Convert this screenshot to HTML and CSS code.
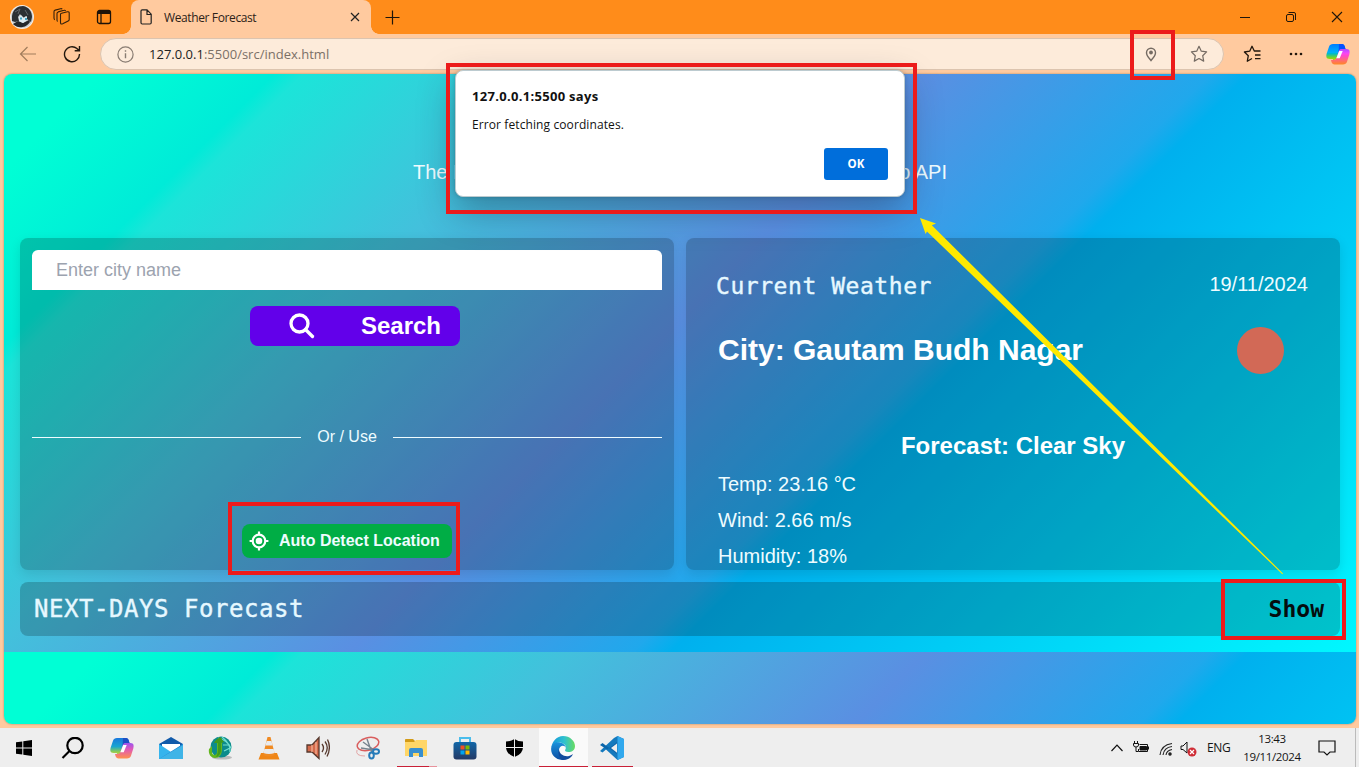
FILE: index.html
```html
<!DOCTYPE html>
<html lang="en">
<head>
<meta charset="utf-8">
<title>Weather Forecast</title>
<link rel="stylesheet" href="styles.css">
</head>
<body>
<svg class="defs" width="0" height="0">
  <defs>
    <linearGradient id="cpA" x1="0" y1="0" x2="0" y2="1"><stop offset="0" stop-color="#1877dd"/><stop offset=".45" stop-color="#19a5d0"/><stop offset=".72" stop-color="#8ccb55"/><stop offset="1" stop-color="#ffd02f"/></linearGradient>
    <linearGradient id="cpB" x1="0" y1="0" x2="0" y2="1"><stop offset="0" stop-color="#9a55ef"/><stop offset=".4" stop-color="#e058b8"/><stop offset="1" stop-color="#ff914d"/></linearGradient>
    <linearGradient id="edgeA" x1="0" y1="0" x2="1" y2="0"><stop offset="0" stop-color="#1595dc"/><stop offset=".55" stop-color="#2fc1cf"/><stop offset="1" stop-color="#69dc60"/></linearGradient>
    <linearGradient id="edgeB" x1="0" y1="0" x2="0" y2="1"><stop offset="0" stop-color="#1a92dc"/><stop offset="1" stop-color="#0c4da2"/></linearGradient>
    <linearGradient id="store" x1="0" y1="0" x2="0" y2="1"><stop offset="0" stop-color="#1267a8"/><stop offset="1" stop-color="#243a66"/></linearGradient>
    <symbol id="copilot" viewBox="0 0 24 24">
      <path d="M7 2h9c1.600 0 2.300 1 2.800 2.500L19.500 7h-3c-2 0-2.800 1-3.300 2.700L11 17.500C10.400 19.500 9.500 21 7.500 21H6l1-4H3.500C0 17 0 14 .7 11.500L3 4.800C3.600 3 5 2 7 2z" fill="url(#cpA)"/>
      <path d="M13 2h3c1.600 0 2.300 1 2.800 2.500L19.500 7h-3c-2 0-2.800 1-3.300 2.700L12.500 12z" fill="#1c4fc4"/>
      <path d="M17 22.500H8.500C7 22.500 6 21.500 5.500 20L5 18h2.500c2 0 2.800-1 3.300-2.700L13 8.500C13.600 7 14.500 7 16.500 7h4C24 7 24 10 23.300 12.500L21 19.700c-.6 1.800-2 2.800-4 2.800z" fill="url(#cpB)"/>
      <path d="M13.200 9h3.500l-3 7.300h-3.400z" fill="#fff"/>
    </symbol>
  </defs>
</svg>

<header class="titlebar">
  <svg class="avatar" viewBox="0 0 24 24"><circle cx="12" cy="12" r="12" fill="#f4eee8"/><circle cx="12" cy="12" r="11" fill="#c9cdd0"/><path d="M2 11C3 4 8 1 13 1c6 1 9 6 9 11l-1 5-4-3-1-3-3 2-3-4-2 3 1 4-4 1-3-1z" fill="#2b3034"/><path d="M3 19l5-3 5 2 6-3 1 2a11 11 0 0 1-16 3z" fill="#24282c"/><path d="M9 12l2-2 3 3 3-2v4l-4 3-4-2z" fill="#dcebf1"/><path d="M10 12.500h2v2h-2zm5 .500h2v2h-2z" fill="#42a4c4"/><path d="M5 7l5-3-2 5m7-4l3 5" stroke="#60666b" fill="none"/></svg>
  <svg class="workspaces" viewBox="0 0 18 18" fill="none" stroke="#35200b" stroke-width="1.100" stroke-linejoin="round"><path d="M7.500 6.500q0-1 1-1.200l6-1.500q1.700-.3 1.700 1.200v6.500q0 1-1 1.500l-5.500 2.700q-2.200 1-2.200-1.200z"/><path d="M4.600 13.500q-.6-.5-.6-1.500V5.500q0-1.200 1.200-1.600L11 2.300q1-.3 1.700.5M1.800 11.700Q1 11.200 1 10V3.700q0-1.200 1.200-1.600L7.500.7q1.200-.2 1.800.4"/></svg>
  <svg class="tabactions" viewBox="0 0 16 16" fill="none" stroke="#1d1309" stroke-width="1.300"><rect x="1.500" y="1.500" width="13" height="13" rx="2"/><path d="M2 3.500h12" stroke-width="3"/><path d="M5 5v9"/></svg>
  <div class="tab">
    <svg width="12" height="16" viewBox="0 0 12 16" fill="none" stroke="#222" stroke-width="1.200"><path d="M2.200.8H7l4.200 4.400v8.600q0 1.200-1.200 1.200H2.200Q1 15 1 13.800V2Q1 .8 2.200.8zM7 1v4.500h4"/></svg>
    <span>Weather Forecast</span>
    <svg width="10" height="10" viewBox="0 0 10 10" stroke="#222" stroke-width="1.200"><path d="M1 1l8 8M9 1L1 9"/></svg>
  </div>
  <svg class="plus" viewBox="0 0 15 15" stroke="#1f160b" stroke-width="1.200"><path d="M7.500.5v14M.5 7.500h14"/></svg>
  <div class="wincontrols">
    <svg width="12" height="12" viewBox="0 0 12 12" stroke="#1f160b"><path d="M1 6.500h10"/></svg>
    <svg width="12" height="12" viewBox="0 0 12 12" fill="none" stroke="#1f160b"><rect x="1.500" y="3.500" width="7" height="7" rx="1.500"/><path d="M3.500 1.500H9q1.500 0 1.500 1.500v6"/></svg>
    <svg width="12" height="12" viewBox="0 0 12 12" stroke="#1f160b" stroke-width="1.100"><path d="M1 1l10 10M11 1L1 11"/></svg>
  </div>
</header>

<nav class="toolbar">
  <svg class="back" viewBox="0 0 18 16" fill="none" stroke="#a17c5c" stroke-width="1.200"><path d="M17 8H1.500M8.500 1L1.500 8l7 7"/></svg>
  <svg class="reload" viewBox="0 0 18 18" fill="none" stroke="#23180e" stroke-width="1.400"><path d="M16.500 9A7.500 7.500 0 1 1 14 3.600L16 5.300M16.500 1v4.700h-4.800"/></svg>
  <div class="address">
    <svg width="17" height="17" viewBox="0 0 17 17" fill="none" stroke="#887c72" stroke-width="1.200"><circle cx="8.500" cy="8.500" r="7.600"/><path d="M8.500 7.200v5M8.500 4.300v1.500" stroke-width="1.400"/></svg>
    <span class="url"><b>127.0.0.1</b>:5500/src/index.html</span>
    <svg class="pin" viewBox="0 0 12 15" fill="none" stroke="#756b63" stroke-width="1.400"><path d="M6 13.500C4.500 11.600 1.500 9 1.500 5.700a4.500 4.500 0 0 1 9 0C10.500 9 7.500 11.600 6 13.500z"/><circle cx="6" cy="5.500" r="1.200" fill="#756b63"/></svg>
    <svg class="star" viewBox="0 0 18 18" fill="none" stroke="#756b63" stroke-width="1.200" stroke-linejoin="round"><path d="M9 1.300l2.300 4.900 5.300.7-3.900 3.800 1 5.400L9 13.500l-4.700 2.600 1-5.400L1.400 6.900l5.300-.7z"/></svg>
  </div>
  <svg class="favorites" viewBox="0 0 18 18" fill="none" stroke="#21160c" stroke-width="1.300"><path d="M9 13.500L4.300 16.200l1-5.500L1.400 7l5.300-.8L9 1.300 11.300 6H17.500M12 10h5.500M12 13.700h5.500" stroke-linejoin="round"/></svg>
  <svg class="more" viewBox="0 0 14 4" fill="#21160c"><circle cx="2" cy="2" r="1.300"/><circle cx="7" cy="2" r="1.300"/><circle cx="12" cy="2" r="1.300"/></svg>
  <svg class="copilot-top"><use href="#copilot"/></svg>
</nav>

<main class="viewport">
  <section class="app">
    <div class="tagline"><span>The B</span><span>o API</span></div>
    <div class="cards">
      <section class="card search-card">
        <div class="city-input">Enter city name</div>
        <div class="search-button">
          <svg width="26" height="26" viewBox="0 0 26 26" fill="none" stroke="#fff" stroke-width="3.300"><circle cx="10.500" cy="10.500" r="8.500"/><path d="M16.500 16.500l7 7" stroke-linecap="round"/></svg>
          <span>Search</span>
        </div>
        <div class="divider"><i></i><span>Or / Use</span><i></i></div>
        <div class="detect">
          <svg width="20" height="20" viewBox="0 0 20 20" fill="none" stroke="#fff" stroke-width="2.200"><circle cx="10" cy="10" r="6.300"/><circle cx="10" cy="10" r="3.300" fill="#fff" stroke="none"/><path d="M10 .6v3M10 16.400v3M.6 10h3M16.400 10h3"/></svg>
          <span>Auto Detect Location</span>
        </div>
      </section>
      <section class="card weather-card">
        <div class="weather-head"><h2>Current Weather</h2><time>19/11/2024</time></div>
        <div class="city-row"><h1>City: Gautam Budh Nagar</h1><span class="sun"></span></div>
        <h3>Forecast: Clear Sky</h3>
        <p>Temp: 23.16 °C</p>
        <p>Wind: 2.66 m/s</p>
        <p>Humidity: 18%</p>
      </section>
    </div>
    <section class="next"><h2>NEXT-DAYS Forecast</h2><span>Show</span></section>
  </section>
</main>

<footer class="taskbar">
  <div class="apps">
    <div class="slot"><svg width="16" height="16" viewBox="0 0 16 16"><path d="M0 2.300L6.300 1.400v6.100H0zM7.300 1.200L16 0v7.500H7.300zM0 8.500h6.300v6.100L0 13.700zM7.300 8.500H16V16l-8.700-1.200z"/></svg></div>
    <div class="slot"><svg width="24" height="22" viewBox="0 0 24 22" fill="none" stroke="#000" stroke-width="2.200"><circle cx="14" cy="8.500" r="7.700"/><path d="M8.500 14L1.500 21"/></svg></div>
    <div class="slot"><svg width="24" height="24"><use href="#copilot"/></svg></div>
    <div class="slot"><svg width="24" height="22" viewBox="0 0 24 22"><path d="M0 7L12 0l12 7v4H0z" fill="#105aaa"/><path d="M3 7h18v6l-9 4-9-4z" fill="#fff"/><path d="M0 7l12 8 12-8v15H0z" fill="#35b4ed"/><path d="M0 22L24 7v15z" fill="#2289d7"/><path d="M0 22L24 8v14z" fill="#4cc6ee" opacity=".7"/></svg></div>
    <div class="slot"><svg width="24" height="24" viewBox="0 0 24 24"><ellipse cx="14" cy="21.500" rx="10" ry="2" fill="#bbb"/><circle cx="13" cy="11" r="10.500" fill="#0c8b8b"/><path d="M10 2q9 2 13 10M14 1q9 7 8 15M15 9h7M16 15l6-3" fill="none" stroke="#72dfd0" stroke-width="1.200"/><path d="M9 7l5-5v11c0 6-3 9-7 9-4 0-7-4-6-9l3-3v6c0 4 5 4 5 0z" fill="#62b61e"/><path d="M8 4l4-3 4 5-3 1v7c0 4-3 7-5 7 2-3 2-6 2-9V7H6z" fill="#3f9a1d"/></svg></div>
    <div class="slot"><svg width="22" height="23" viewBox="0 0 22 23"><path d="M3 16h16l2.500 6.500H.5z" fill="#ef8516"/><path d="M9.500 0h3L17 18q-6 3-12 0z" fill="#f08a22"/><path d="M8.700 4h4.700l1.300 4.500H7.400zM6.400 12h9.200l1 4q-5.600 2-11.200 0z" fill="#e9eaec"/></svg></div>
    <div class="slot"><svg width="24" height="24" viewBox="0 0 24 24" fill="none" stroke="#57392e" stroke-width="1.300"><path d="M1 9h5l7-7.500v21L6 16H1z" fill="#d46a4b"/><path d="M10 6v12M6 9v7" stroke="#f3b094"/><path d="M16 8q3 4 0 8M19 5.500q4.500 6 0 13M21.500 3.500q4 8-.5 17"/></svg></div>
    <div class="slot"><svg width="25" height="24" viewBox="0 0 25 24" fill="none"><ellipse cx="13" cy="8" rx="11" ry="6.300" stroke="#d95e5e" stroke-width="1.500" transform="rotate(-15 13 8)"/><path d="M2 14q-2 6 8 6" stroke="#e3a4a4"/><path d="M12 3l5 14M6 12l13 2M8 6l11 8" stroke="#77838e" stroke-width="1.400"/><ellipse cx="21" cy="15.500" rx="3" ry="2.200" stroke="#257bb9" stroke-width="2"/><ellipse cx="16.500" cy="19.500" rx="2.300" ry="3" stroke="#257bb9" stroke-width="2"/></svg></div>
    <div class="slot explorer"><svg width="22" height="20" viewBox="0 0 22 20"><path d="M0 1.500Q0 1 1 1h7l2 2h11v15H0z" fill="#d39b18"/><path d="M0 4h9l2-2h11v16H0z" fill="#ffd667"/><path d="M4 19v-7q0-2 2-2h10q2 0 2 2v7h-4v-4H8v4z" fill="#388fcf"/></svg></div>
    <div class="slot"><svg width="24" height="24" viewBox="0 0 24 24"><path d="M7 7V2h10v5" fill="none" stroke="#4abdec" stroke-width="2"/><rect x=".5" y="6" width="23" height="17.500" rx="3" fill="url(#store)"/><path d="M7.500 9.500h4v4h-4z" fill="#f25022"/><path d="M12.500 9.500h4v4h-4z" fill="#7fba00"/><path d="M7.500 14.500h4v4h-4z" fill="#00a4ef"/><path d="M12.500 14.500h4v4h-4z" fill="#ffb900"/></svg></div>
    <div class="slot"><svg width="17" height="18" viewBox="0 0 17 18"><path d="M8.500 0Q12 2.500 17 2.500V8q0 7-8.500 10Q0 15 0 8V2.500Q5 2.500 8.500 0z"/><path d="M8.500 0v18M0 8.500h17" stroke="#eee"/></svg></div>
    <div class="slot edge"><svg width="24" height="24" viewBox="0 0 24 24"><path d="M.3 12C1 5 6 0 12 0c7 0 12 5 12 10 0 4-3 6-6.500 6-3 0-4-1.200-3.200-2.400C15.500 12 15.200 8.500 11 7 6.500 5.500 2 8 .3 12z" fill="url(#edgeA)"/><path d="M.2 12C1 7 5 5.500 9 6.500c4 .8 6 3.500 5.800 5.500C14 8.500 8.500 9 8 13.500 7.500 18 12 22.500 18 21.500c-2.500 2-5 2.500-7 2.400C4 23.500-.5 18 .2 12z" fill="url(#edgeB)"/><path d="M8 13C8 18 13 21 18 20c2-.5 3-1.200 4-2-1 3-5 6-10 6C8 22 6.500 17 8 13z" fill="#114b9c"/></svg></div>
    <div class="slot code"><svg width="24" height="24" viewBox="0 0 24 24"><path d="M17.500 0L24 3v18l-6.500 3L6 13.500 2.500 16.500 0 15l14-13z" fill="#1479bd"/><path d="M0 9l2.500-2L17 18V6l-3.500 3L7 13.500z" fill="#0b65aa"/><path d="M17.500 0L24 3v18l-6.500 3z" fill="#31a8ed"/><path d="M17 7.500L11 12l6 4.700z" fill="#eee"/></svg></div>
  </div>
  <div class="tray">
    <svg class="chev" viewBox="0 0 12 8" fill="none" stroke="#111" stroke-width="1.200"><path d="M.5 7L6 1.200 11.500 7"/></svg>
    <svg class="battery" viewBox="0 0 17 13" fill="none" stroke="#111"><path d="M6.500 3.500h8v7h-9V8" /><path d="M7 5.500h6.500v3.500H7z" fill="#111"/><path d="M15.500 5.500v3M1.500 0v3M4.500 0v3M.5 2.500h5V4q0 2-2.500 2T.5 4zM3 6v4.500h2"/></svg>
    <svg class="wifi" viewBox="0 0 14 14" fill="none" stroke="#222" stroke-width="1.100"><path d="M1 13Q2 3 13 1.500M4 13q1-7.500 9-8.500M7 13q.5-4.500 6-5.500"/><circle cx="11" cy="12" r="1.200" fill="#222"/></svg>
    <svg class="volume" viewBox="0 0 17 16" fill="none" stroke="#111"><path d="M1 5h2l4-4v11L3 8.500H1z"/><circle cx="12" cy="11" r="4.500" fill="#cf2d36" stroke="none"/><path d="M10 9l4 4m0-4l-4 4" stroke="#fff" stroke-width="1.200"/></svg>
    <span class="lang">ENG</span>
    <div class="clock"><span>13:43</span><span>19/11/2024</span></div>
    <svg class="notice" viewBox="0 0 18 16" fill="none" stroke="#111" stroke-width="1.200"><path d="M1 1h16v11h-5l-3 3-3-3H1z"/></svg>
  </div>
</footer>

<div class="dialog">
  <strong>127.0.0.1:5500 says</strong>
  <p>Error fetching coordinates.</p>
  <span class="ok">OK</span>
</div>
<div class="mark mark-pin"></div>
<div class="mark mark-dialog"></div>
<div class="mark mark-detect"></div>
<div class="mark mark-show"></div>
<svg class="arrow" viewBox="0 0 1359 767"><path d="M920 218L936 223.500 931.800 225.300 1283 573.500 1282.300 574.200 927 231.500 925.600 234z" fill="#ffe900"/></svg>
</body>
</html>
```
FILE: styles.css
```css
* { box-sizing: border-box; }
body { margin: 0; width: 1359px; height: 767px; overflow: hidden; background: #ffca9f; font-family: "Liberation Sans", Arial, sans-serif; display: flex; flex-direction: column; position: relative; }
h1, h2, h3, p { margin: 0; }
svg { display: block; flex: none; }
.defs { position: absolute; }
.titlebar { height: 34px; flex: none; background: #ff8c1a; display: flex; align-items: center; padding-left: 10px; font-family: "Open Sans", sans-serif; }
.avatar { width: 24px; height: 24px; }
.workspaces { width: 18px; height: 18px; margin-left: 19px; }
.tabactions { width: 16px; height: 16px; margin-left: 25px; }
.tab { width: 240px; height: 34px; margin-left: 19px; background: #ffca9f; border-radius: 8px 8px 0 0; display: flex; align-items: center; padding: 0 11px 0 9px; font-size: 12px; color: #2d2218; position: relative; }
.tab::before, .tab::after { content: ""; position: absolute; bottom: 0; width: 8px; height: 8px; }
.tab::before { left: -8px; background: radial-gradient(circle at 0 0, #ff8c1a 7.500px, #ffca9f 8px); }
.tab::after { right: -8px; background: radial-gradient(circle at 100% 0, #ff8c1a 7.500px, #ffca9f 8px); }
.tab span { margin-left: 12px; flex: 1; letter-spacing: -.38px; }
.plus { width: 15px; height: 15px; margin-left: 14px; }
.wincontrols { margin-left: auto; display: flex; gap: 34px; padding-right: 16px; }
.toolbar { height: 40px; flex: none; display: flex; align-items: center; padding-left: 19px; font-family: "Open Sans", sans-serif; }
.back { width: 18px; height: 16px; }
.reload { width: 18px; height: 18px; margin-left: 26px; }
.address { width: 1124px; height: 32px; margin-left: 19px; border: 1px solid #dcc4af; border-radius: 16px; background: #fdebda; display: flex; align-items: center; padding: 0 15px 0 16px; }
.url { flex: 1; margin-left: 15px; color: #7b7067; font-size: 13px; letter-spacing: .01px; }
.url b { font-weight: 400; color: #222; }
.pin { width: 12px; height: 15px; }
.star { width: 18px; height: 18px; margin-left: 33px; }
.favorites { width: 18px; height: 18px; margin-left: 19px; }
.more { width: 14px; height: 4px; margin-left: 28px; }
.copilot-top { width: 24px; height: 24px; margin-left: 23px; filter: saturate(1.5); }
.viewport { width: 1352px; height: 650px; flex: none; margin-left: 4px; border-radius: 8px; overflow: hidden; background: linear-gradient(135deg, #00ffd5 0%, #00ffd5 5%, #00ebd8 14%, #1ce4d9 15.500%, #43c0dc 29.500%, #5a8fe2 47.800%, #20a8ec 62.500%, #00b0ee 64.500%, #00c3f3 74%, #00f8ff 100%) 0 0 / 1352px 578px; box-shadow: 0 0 2px #a47b58; }
.app { height: 578px; padding: 84px 16px 16px; display: flex; flex-direction: column; }
.tagline { width: 534px; height: 28px; flex: none; margin: 0 auto 52px; display: flex; justify-content: space-between; align-items: center; color: #effcff; font-size: 20px; }
.cards { display: grid; grid-template-columns: 654px 654px; gap: 12px; height: 332px; flex: none; }
.card { height: 332px; background: rgba(0,0,0,.2); border-radius: 8px; box-shadow: 0 4px 12px rgba(0,0,0,.1); color: #eefcff; }
.search-card { padding: 12px; display: flex; flex-direction: column; }
.city-input { height: 40px; background: #fff; border-radius: 6px 6px 0 0; padding: 0 24px; line-height: 40px; font-size: 18px; color: #9ca3af; }
.search-button { width: 210px; height: 40px; margin: 16px 0 0 218px; background: #6200ea; border-radius: 8px; display: flex; align-items: center; padding: 0 19px 0 39px; justify-content: space-between; color: #fff; font-size: 24px; font-weight: 700; }
.divider { height: 24px; margin-top: 79px; display: flex; align-items: center; gap: 16px; font-size: 16px; }
.divider i { flex: 1; height: 1px; background: #effcff; }
.detect { width: 210px; height: 34px; margin: 75px 0 0 210px; background: #00ad45; border-radius: 8px; display: flex; align-items: center; padding-left: 7px; font-size: 16px; font-weight: 700; white-space: nowrap; }
.detect span { margin-left: 10px; }
.weather-card { padding: 32px; }
.weather-head { height: 28px; display: flex; justify-content: space-between; align-items: center; font-size: 20px; }
.weather-head h2, .next h2 { font: 400 23px "DejaVu Sans Mono", monospace; color: #e6f8ff; -webkit-text-stroke: .4px #e6f8ff; }
.weather-head h2 { letter-spacing: .55px; margin-left: -2px; padding-top: 4px; }
.city-row { margin-top: 27px; height: 50px; display: flex; justify-content: space-between; align-items: center; padding-right: 24px; }
.city-row h1 { font-size: 30px; color: #fff; }
.sun { width: 47px; height: 47px; border-radius: 50%; background: #d26956; }
.weather-card h3 { text-align: center; font-size: 24px; line-height: 32px; margin: 55px 0 8px; color: #fff; }
.weather-card p { font-size: 20px; line-height: 28px; margin-bottom: 8px; }
.next { height: 54px; flex: none; margin-top: 12px; padding: 0 16px 0 14px; border-radius: 8px; background: rgba(0,0,0,.2); display: flex; align-items: center; justify-content: space-between; }
.next h2 { font-size: 24px; letter-spacing: .55px; }
.next span { font: 700 23px "DejaVu Sans Mono", monospace; color: #050c0e; }
.taskbar { height: 39px; margin-top: 4px; flex: none; background: #eee; display: flex; justify-content: space-between; font-family: "Open Sans", sans-serif; }
.apps { display: grid; grid-template-columns: 48px 49px repeat(11, 49.100px); }
.slot { display: flex; align-items: center; justify-content: center; padding-top: 1px; }
.explorer { background: linear-gradient(90deg, transparent 5px, #c91f36 5px, #c91f36 37px, #e8929c 37px, #e8929c 45px, transparent 45px) bottom / 100% 1px no-repeat; }
.edge { background: linear-gradient(#c91f36, #c91f36) bottom / 100% 1px no-repeat, #fafafa; }
.code { background: linear-gradient(90deg, transparent 4px, #c91f36 4px, #c91f36 45px, transparent 45px) bottom / 100% 1px no-repeat; }
.tray { display: flex; align-items: center; color: #151515; font-size: 12px; border-right: 1px solid #bbb; margin-right: 3px; padding-right: 19px; }
.chev { width: 12px; height: 8px; }
.battery { width: 17px; height: 13px; margin-left: 10px; }
.wifi { width: 14px; height: 14px; margin-left: 9px; margin-top: 3px; }
.volume { width: 17px; height: 16px; margin-left: 7px; margin-top: 3px; }
.lang { width: 24px; margin-left: 10px; letter-spacing: -.4px; }
.clock { width: 60px; margin-left: 11px; display: flex; flex-direction: column; align-items: center; line-height: 18px; font-size: 11.500px; letter-spacing: -.35px; white-space: nowrap; }
.notice { width: 18px; height: 16px; margin-left: 16px; }
.dialog { position: absolute; left: 455px; top: 70px; width: 450px; height: 127px; background: #fff; border: 1px solid #bccbd0; border-radius: 8px; padding: 16px; font-family: "Open Sans", sans-serif; display: flex; flex-direction: column; box-shadow: 0 14px 36px rgba(20,40,60,.38), 0 0 4px rgba(0,0,0,.2); color: #111; }
.dialog strong { font-size: 13px; line-height: 18px; letter-spacing: .3px; }
.dialog p { font-size: 12px; line-height: 18px; margin-top: 11px; letter-spacing: .1px; }
.ok { width: 64px; height: 32px; margin: 14px 0 0 auto; border-radius: 3px; background: #006edb; color: #fff; text-align: center; line-height: 32px; font-size: 11.500px; font-weight: 700; }
.mark { position: absolute; border: 4px solid #ec1b1b; }
.mark-pin { left: 1130px; top: 30px; width: 45px; height: 50px; }
.mark-dialog { left: 446px; top: 63px; width: 471px; height: 151px; }
.mark-detect { left: 228px; top: 502px; width: 232px; height: 73px; }
.mark-show { left: 1221px; top: 579px; width: 125px; height: 61px; }
.arrow { position: absolute; left: 0; top: 0; width: 1359px; height: 767px; }
```
